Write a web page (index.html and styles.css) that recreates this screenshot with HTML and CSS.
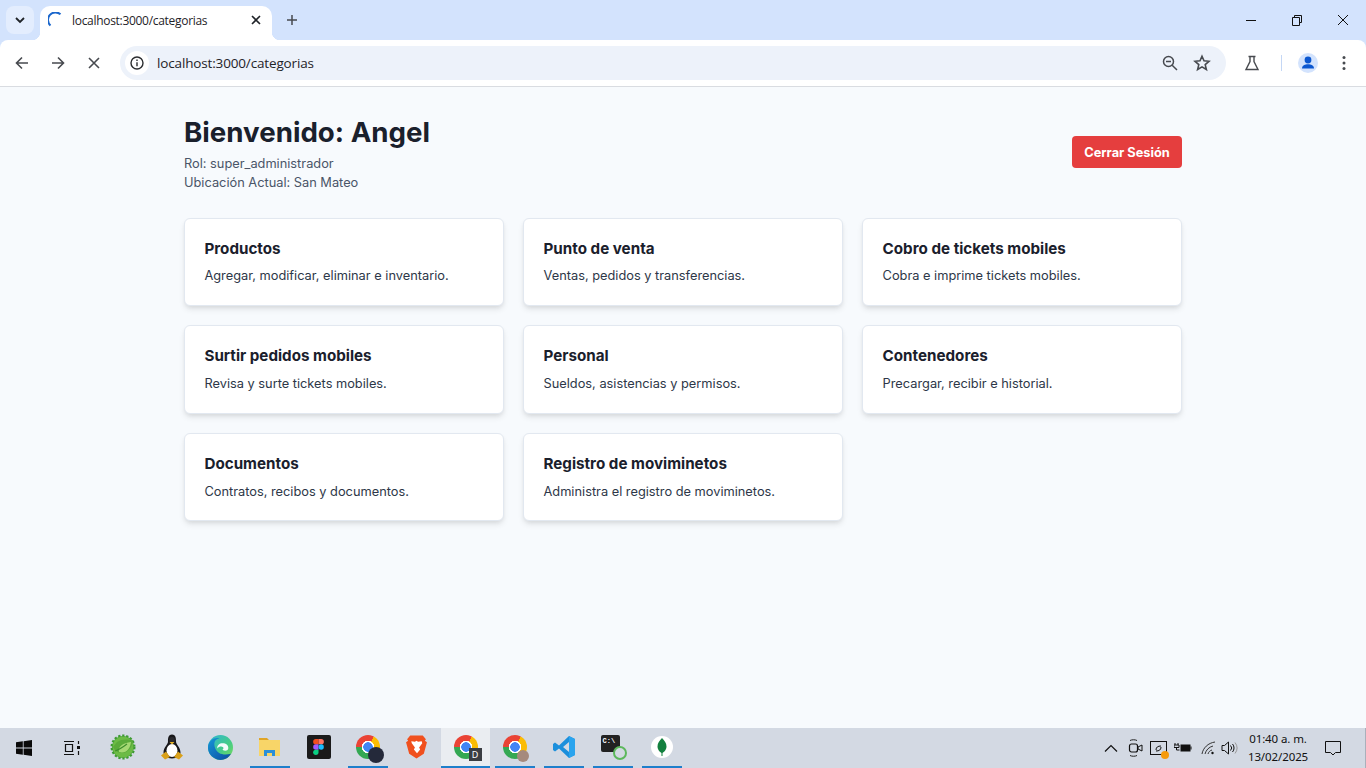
FILE: index.html
```html
<!DOCTYPE html>
<html lang="es">
<head>
<meta charset="utf-8">
<title>localhost:3000/categorias</title>
<link rel="stylesheet" href="styles.css">
</head>
<body>
<header class="chrome">
  <div class="tabstrip">
    <button class="tab-search"><svg width="12" height="12" viewBox="0 0 12 12"><path d="M2 4l4 4 4-4" fill="none" stroke="#1f2328" stroke-width="1.8"/></svg></button>
    <div class="tab">
      <svg class="spinner" width="14" height="16" viewBox="0 0 14 16"><path d="M12.500 2.300A6.800 6.800 0 0 0 2.500 13.500" fill="none" stroke="#1a66cc" stroke-width="2"/></svg>
      <span class="tab-title">localhost:3000/categorias</span>
      <svg class="tab-close" width="10" height="10" viewBox="0 0 10 10"><path d="M1 1l8 8M9 1l-8 8" stroke="#1f2328" stroke-width="1.6"/></svg>
    </div>
    <svg class="new-tab" width="12" height="12" viewBox="0 0 12 12"><path d="M6 1v10M1 6h10" stroke="#474a4f" stroke-width="1.5"/></svg>
    <div class="window-controls">
      <svg width="46" height="12" viewBox="0 0 46 12"><path d="M18 6.500h10" stroke="#111" stroke-width="1"/></svg>
      <svg width="46" height="12" viewBox="0 0 46 12"><path d="M18.500 3.500h7v8h-7zM20.500 3.500v-2h7v7h-2" fill="none" stroke="#111" stroke-width="1"/></svg>
      <svg width="46" height="12" viewBox="0 0 46 12"><path d="M18 1l10 10M28 1l-10 10" stroke="#111" stroke-width="1"/></svg>
    </div>
  </div>
  <div class="toolbar">
    <svg class="nav-icon" width="16" height="16" viewBox="0 0 16 16"><path d="M14 8H2.500M8 2.500L2.500 8 8 13.500" fill="none" stroke="#474a4f" stroke-width="1.6"/></svg>
    <svg class="nav-icon" width="16" height="16" viewBox="0 0 16 16"><path d="M2 8h11.500M8 2.500L13.500 8 8 13.500" fill="none" stroke="#474a4f" stroke-width="1.6"/></svg>
    <svg class="nav-icon" width="16" height="16" viewBox="0 0 16 16"><path d="M3 3l10 10M13 3L3 13" stroke="#474a4f" stroke-width="1.6"/></svg>
    <div class="omnibox">
      <span class="site-info"><svg width="16" height="16" viewBox="0 0 16 16"><circle cx="8" cy="8" r="6" fill="none" stroke="#2b2d30" stroke-width="1.4"/><path d="M8 7.200v4M8 4.600v1.400" stroke="#2b2d30" stroke-width="1.4"/></svg></span>
      <span class="url">localhost:3000/categorias</span>
      <svg class="omni-zoom" width="18" height="18" viewBox="0 0 18 18"><circle cx="7.500" cy="7.500" r="5" fill="none" stroke="#474a4f" stroke-width="1.5"/><path d="M5 7.500h5M11.200 11.200L16 16" stroke="#474a4f" stroke-width="1.5"/></svg>
      <svg class="omni-star" width="18" height="18" viewBox="0 0 18 18"><path d="M9 2.200l2 4.600 5 .5-3.800 3.300 1.200 4.900L9 12.900l-4.400 2.600 1.200-4.900L2 7.300l5-.5z" fill="none" stroke="#474a4f" stroke-width="1.6"/></svg>
    </div>
    <svg class="lab" width="16" height="16" viewBox="0 0 16 16"><path d="M4.500 1.500h7M6 1.500v5L2 14.500h12l-4-8v-5" fill="none" stroke="#474a4f" stroke-width="1.4"/></svg>
    <span class="tool-sep"></span>
    <span class="avatar"><svg width="20" height="20" viewBox="0 0 20 20"><circle cx="10" cy="7" r="3.400" fill="#0b57d0"/><path d="M4 15.500c0-3 3-4.300 6-4.300s6 1.300 6 4.300z" fill="#0b57d0"/></svg></span>
    <svg class="kebab" width="4" height="16" viewBox="0 0 4 16"><circle cx="2" cy="2.500" r="1.500" fill="#474a4f"/><circle cx="2" cy="8" r="1.500" fill="#474a4f"/><circle cx="2" cy="13.500" r="1.500" fill="#474a4f"/></svg>
  </div>
</header>

<main class="page">
  <div class="container">
    <section class="welcome">
      <div>
        <h1>Bienvenido: Angel</h1>
        <p class="meta">Rol: super_administrador</p>
        <p class="meta">Ubicación Actual: San Mateo</p>
      </div>
      <button class="logout">Cerrar Sesión</button>
    </section>
    <section class="cards">
      <article class="card"><h2>Productos</h2><p>Agregar, modificar, eliminar e inventario.</p></article>
      <article class="card"><h2>Punto de venta</h2><p>Ventas, pedidos y transferencias.</p></article>
      <article class="card"><h2>Cobro de tickets mobiles</h2><p>Cobra e imprime tickets mobiles.</p></article>
      <article class="card"><h2>Surtir pedidos mobiles</h2><p>Revisa y surte tickets mobiles.</p></article>
      <article class="card"><h2>Personal</h2><p>Sueldos, asistencias y permisos.</p></article>
      <article class="card"><h2>Contenedores</h2><p>Precargar, recibir e historial.</p></article>
      <article class="card"><h2>Documentos</h2><p>Contratos, recibos y documentos.</p></article>
      <article class="card"><h2>Registro de moviminetos</h2><p>Administra el registro de moviminetos.</p></article>
    </section>
  </div>
</main>

<footer class="taskbar">
  <div class="task-start"><svg width="16" height="16" viewBox="0 0 16 16"><path d="M0 2.300l6.800-1v6.300H0zM7.600 1.200L16 0v7.600H7.600zM0 8.400h6.800v6.300l-6.800-1zM7.600 8.400H16V16l-8.400-1.200z" fill="#0a0a0a"/></svg></div>
  <div class="task-view"><svg width="18" height="16" viewBox="0 0 18 16"><path d="M1 1.500h10M1 14.500h10M2.500 4.500h7v7h-7zM15.500 1v3M15.500 11v4" fill="none" stroke="#111" stroke-width="1.2"/><rect x="14" y="6" width="3" height="3" fill="#111"/></svg></div>
  <div class="task-item"><svg width="26" height="26" viewBox="0 0 26 26"><circle cx="13" cy="13" r="11" fill="#4fa53a" stroke="#3d9a33" stroke-width="3" stroke-dasharray="2.200 1.700"/><circle cx="13" cy="13" r="10.500" fill="#6cbb45"/><path d="M3 13l4-5c4-3 10-3 16-2-1 7-4 12-10 13-3 .5-6-1-8-3z" fill="#5aab3a"/><path d="M9 18c-1-6 4-9 12-10-1 7-5 12-12 10z" fill="#a5d873"/><path d="M5 17c4-1 8-4 12-7" stroke="#3e8f2d" stroke-width="1.200" fill="none"/></svg></div>
  <div class="task-item"><svg width="22" height="26" viewBox="0 0 22 26"><path d="M11 .500c-4 0-4 4-4 7 0 3-4.500 6-4.500 11 0 3 3.500 6 8.500 6s8.500-3 8.500-6c0-5-4.500-8-4.500-11 0-3 0-7-4-7z" fill="#17171a"/><ellipse cx="11" cy="16.500" rx="5.500" ry="6.500" fill="#fff"/><ellipse cx="11" cy="6" rx="2.800" ry="3" fill="#2a2a2e"/><path d="M8.500 8h5l-2.500 2.500z" fill="#eab52a"/><path d="M0 21.500l5-4 4 5.500-5 2.500zM22 21.500l-5-4-4 5.500 5 2.500z" fill="#d9a019"/></svg></div>
  <div class="task-item"><svg width="25" height="25" viewBox="0 0 24 24"><defs><linearGradient id="edge" x1="0" y1="0" x2="1" y2="1"><stop offset="0" stop-color="#2fb5d8"/><stop offset=".6" stop-color="#46cc86"/><stop offset="1" stop-color="#7ede58"/></linearGradient><linearGradient id="edge2" x1="0" y1="0" x2="1" y2="1"><stop offset="0" stop-color="#1596d8"/><stop offset="1" stop-color="#0c4aa0"/></linearGradient></defs><circle cx="12" cy="12" r="12" fill="url(#edge)"/><path d="M0 12C0 5 6 2 11 3 6 4 5 8 7 13c2 5 8 7 15 5-4 7-12 7-16 4-4-2-6-6-6-10z" fill="url(#edge2)"/><path d="M9 13c-.5-3 2-5 5-5 3.500 0 5.500 2 5.500 4.500 0 1.500-1 2.500-3 2.500-1.500 0-2.500-.5-2.500-1 1-.5 1-1.500.5-2.200-.8-1-2.500-1-3.500-.5-1 .5-1.700 1-2 1.700z" fill="#f3fbfd"/></svg></div>
  <div class="task-item running"><svg width="22" height="20" viewBox="0 0 22 20"><path d="M0 1h8l2 2h-10z" fill="#e0a526"/><rect y="3" width="21" height="16" fill="#f8d568"/><path d="M5 19v-6h11v6h-3v-3H8v3z" fill="#2b8fd9"/></svg></div>
  <div class="task-item"><span class="figma-box"><svg width="11" height="16" viewBox="0 0 12 18"><path d="M3 0h3v6H3a3 3 0 0 1 0-6z" fill="#f24e1e"/><path d="M6 0h3a3 3 0 0 1 0 6H6z" fill="#ff7262"/><path d="M3 6h3v6H3a3 3 0 0 1 0-6z" fill="#a259ff"/><circle cx="9" cy="9" r="3" fill="#1abcfe"/><path d="M3 12h3v3a3 3 0 1 1-3-3z" fill="#0acf83"/></svg></span></div>
  <div class="task-item running"><span class="chrome-wrap"><span class="chrome-logo"></span><span class="badge badge-dark"></span></span></div>
  <div class="task-item"><svg width="23" height="26" viewBox="0 0 22 24"><path d="M5 1h12l3 3.500-1 1.500 2 1.500-3 11-7 4.500-7-4.500-3-11 2-1.500-1-1.500z" fill="#f0501e"/><path d="M6 6.500l3.500.5 1.500-1 1.500 1 3.500-.5.500 2-3 4 1 2-3 3.500-3-3.500 1-2-3-4z" fill="#fff"/></svg></div>
  <div class="task-item active running-active"><span class="chrome-wrap"><span class="chrome-logo"></span><span class="badge badge-d">D</span></span></div>
  <div class="task-item running"><span class="chrome-wrap"><span class="chrome-logo"></span><span class="badge badge-photo"></span></span></div>
  <div class="task-item running"><svg width="24" height="24" viewBox="0 0 24 24"><path d="M17 1l6 3v16l-6 3-10-9.500-4 3L1 15v-6l2-1.500 4 3zM17 7l-6 5 6 5z" fill="#1b8fdc"/><path d="M17 1l6 3v16l-6 3z" fill="#2aa4ee"/></svg></div>
  <div class="task-item running"><span class="cmd-wrap"><span class="cmd-box">C:\</span><span class="cmd-ring"></span></span></div>
  <div class="task-item running"><span class="mongo"><svg width="10" height="18" viewBox="0 0 10 18"><path d="M5 0c2.500 3 4.500 5 4.500 8.500S7 14 5.500 15v3h-1v-3C3 14 .5 12 .5 8.500S2.500 3 5 0z" fill="#13803f"/></svg></span></div>
  <div class="tray">
    <svg width="14" height="8" viewBox="0 0 14 8"><path d="M1 7.500l6-6 6 6" fill="none" stroke="#111" stroke-width="1.2"/></svg>
    <svg class="tray-cam" width="15" height="20" viewBox="0 0 15 20"><path d="M2 2.500c2-1 5-1 7 0M2 17.500c2 1 5 1 7 0" fill="none" stroke="#222"/><rect x="1.500" y="6" width="8" height="8" rx="2" fill="none" stroke="#111" stroke-width="1.200"/><path d="M10 9l4-2v6l-4-2z" fill="none" stroke="#111"/></svg>
    <span class="tray-ws"><svg width="17" height="15" viewBox="0 0 17 15"><rect x=".5" y=".5" width="16" height="13" fill="none" stroke="#111"/><path d="M6 9c0-3 2-4 5-4M11 6c0 3-2 4-5 4" fill="none" stroke="#111"/></svg><span class="tray-dot"></span></span>
    <svg class="tray-bat" width="18" height="12" viewBox="0 0 18 12"><path d="M1 1v2M4 1v2M0 3h5v2.500H0zM2.500 5.500V8h3" fill="none" stroke="#111"/><rect x="6.500" y="2.500" width="10" height="7" fill="#111"/><path d="M17 4.500v3" stroke="#111"/></svg>
    <svg class="tray-wifi" width="16" height="14" viewBox="0 0 16 14"><path d="M1 13C2 7 7 2 14 1M4 13c1-4 4-7 8-8M7 13c.5-2 2-3.500 4-4" fill="none" stroke="#333"/><circle cx="11.500" cy="12" r="1.200" fill="#111"/></svg>
    <svg class="tray-vol" width="17" height="14" viewBox="0 0 17 14"><path d="M1 4.500h2.500L7.500 1v12L3.500 9.500H1z" fill="none" stroke="#111"/><path d="M9.500 4.500a3.500 3.500 0 0 1 0 5M11.500 3a6 6 0 0 1 0 8" fill="none" stroke="#111"/><path d="M14 1.500a9 9 0 0 1 0 11" fill="none" stroke="#999"/></svg>
    <div class="clock"><span>01:40 a. m.</span><span>13/02/2025</span></div>
    <svg class="notify" width="16" height="15" viewBox="0 0 16 15"><path d="M.5.500h15v11h-5L8 14l-2.500-2.500h-5z" fill="none" stroke="#111"/></svg>
    <span class="show-desktop"></span>
  </div>
</footer>
</body>
</html>
```

FILE: styles.css
```css
* { box-sizing: border-box; margin: 0; padding: 0; }
html, body { height: 100%; }
body {
  width: 1366px;
  height: 768px;
  overflow: hidden;
  display: flex;
  flex-direction: column;
  font-family: Inter, "Liberation Sans", sans-serif;
  background: #f7fafd;
}

/* Browser frame */
.chrome { flex: none; height: 87px; background: #d3e3fd; font-family: Roboto, "Noto Sans", sans-serif; }
.tabstrip { height: 40px; display: flex; align-items: flex-end; padding-left: 6px; }
.tab-search {
  width: 28px; height: 28px; margin-bottom: 6px; margin-right: 6px;
  border: 0; border-radius: 8px; background: #e3edfe;
  display: flex; align-items: center; justify-content: center;
}
.tab {
  width: 232px; height: 34px;
  background: #fff; border-radius: 10px 10px 0 0;
  display: flex; align-items: center;
  padding: 0 0 6px 8px;
  position: relative;
}
.tab::before, .tab::after {
  content: ""; position: absolute; bottom: 0; width: 8px; height: 8px;
  background: radial-gradient(circle at 0 0, transparent 8px, #fff 8.500px);
}
.tab::before { left: -8px; }
.tab::after { right: -8px; background: radial-gradient(circle at 100% 0, transparent 8px, #fff 8.500px); }
.spinner { flex: none; }
.tab-title { margin-left: 10px; font-size: 12px; color: #1f2328; width: 172px; white-space: nowrap; font-family: "Open Sans", sans-serif; letter-spacing: -0.3px; }
.tab-close { margin-left: 7px; }
.new-tab { margin: 0 0 14px 14px; }
.window-controls { margin-left: auto; display: flex; align-items: center; width: 138px; height: 40px; }

.toolbar {
  height: 47px; background: #fff; border-bottom: 1px solid #d9dce1;
  border-radius: 8px 8px 0 0;
  display: flex; align-items: center; padding: 0 20px 1px 14px;
}
.nav-icon { flex: none; margin-right: 20px; }
.nav-icon:nth-child(3) { margin-right: 18px; }
.omnibox {
  width: 1106px; height: 34px;
  background: #edf2fa; border-radius: 17px;
  display: flex; align-items: center; padding: 0 15px 0 5px;
  flex: none;
}
.site-info {
  width: 24px; height: 24px; border-radius: 50%; background: #fff;
  display: flex; align-items: center; justify-content: center;
}
.url { margin-left: 8px; font-size: 13.500px; color: #1f2328; font-family: "Open Sans", sans-serif; letter-spacing: -0.15px; }
.omni-zoom { margin-left: auto; }
.omni-star { margin-left: 14px; }
.lab { margin-left: 18px; flex: none; }
.tool-sep { width: 1px; height: 16px; background: #c4d7f5; margin-left: 21px; flex: none; }
.avatar { width: 20px; height: 20px; border-radius: 50%; background: #d3e3fd; margin-left: 16px; flex: none; display: flex; }
.kebab { margin-left: 24px; flex: none; }

/* Page */
.page { flex: 1; min-height: 0; padding: 27px 184px 0; background: #f7fafd; }
.container { width: 998px; }
.welcome { display: flex; align-items: center; justify-content: space-between; margin-bottom: 25.300px; }
h1 { font-size: 27.700px; line-height: 36px; font-weight: 700; color: #1a202c; margin-bottom: 4px; }
.meta { font-size: 12.800px; line-height: 19.200px; color: #4a5568; }
.logout {
  width: 110px; height: 32px; border: 0; border-radius: 4px; margin-bottom: 2px; padding-top: 2px;
  background: #e53e3e; color: #fff;
  font: 700 12.800px/28px Inter, sans-serif;
}
.cards { display: grid; grid-template-columns: repeat(3, 1fr); gap: 19.200px; }
.card {
  height: 88.400px; padding: 20px 19.450px;
  background: #fff; border: 1px solid #e2e8f0; border-radius: 6px;
  box-shadow: 0 4px 6px -1px rgba(0,0,0,.1), 0 2px 4px -1px rgba(0,0,0,.06);
}
.card h2 { font-size: 15.200px; line-height: 19px; font-weight: 700; color: #1a202c; margin-bottom: 8.700px; }
.card p { font-size: 12.800px; line-height: 19.200px; color: #2d3748; }

/* Taskbar */
.taskbar { flex: none; height: 40px; background: #d3d9e3; display: flex; align-items: stretch; font-family: "Noto Sans", sans-serif; }
.task-start { width: 48px; display: flex; align-items: center; justify-content: center; }
.task-view { width: 50px; padding-right: 2px; display: flex; align-items: center; justify-content: center; }
.task-item { width: 49px; display: flex; align-items: center; justify-content: center; border-bottom: 2px solid transparent; position: relative; }
.task-item::after { content: ""; position: absolute; left: 5px; right: 4px; bottom: -2px; height: 2px; }
.running::after { background: #1e7fcb; }
.active { background: #eaedf1; }
.running-active::after { left: 0; right: 0; background: #1e7fcb; }
.figma-box { width: 24px; height: 24px; border-radius: 2px; background: #1a1a1a; display: flex; align-items: center; justify-content: center; }
.chrome-wrap { width: 24px; height: 24px; position: relative; display: block; }
.chrome-logo {
  display: block; width: 24px; height: 24px; border-radius: 50%;
  background:
    radial-gradient(circle, #4285f4 0 4.500px, #fff 5px 6px, transparent 6.500px),
    conic-gradient(from 30deg, #fbbc04 0 120deg, #34a853 120deg 240deg, #ea4335 240deg 360deg);
}
.badge { position: absolute; }
.badge-dark { right: -4px; bottom: -4px; width: 16px; height: 16px; border-radius: 50%; background: #24293a; }
.badge-d { right: -4px; bottom: -2px; width: 13px; height: 13px; background: #3a3d42; color: #fff; font-size: 9px; line-height: 13px; text-align: center; }
.badge-photo { right: -2px; bottom: -3px; width: 12px; height: 12px; border-radius: 50%; background: #a58a7d; }
.cmd-wrap { width: 24px; height: 24px; position: relative; display: block; }
.cmd-box { display: block; width: 19px; height: 17px; background: #222; border-radius: 2px; color: #fff; font: 700 7px/12px "Liberation Mono", monospace; padding-left: 2px; }
.cmd-ring { position: absolute; right: -2px; bottom: -1px; width: 14px; height: 14px; border: 2.500px solid #5cb85c; border-radius: 50%; background: #d3d9e3; }
.mongo { width: 22px; height: 22px; border-radius: 50%; background: #fff; display: flex; align-items: center; justify-content: center; }

.tray { margin-left: auto; display: flex; align-items: center; }
.tray-cam { margin-left: 10px; }
.tray-ws { margin-left: 7px; position: relative; display: flex; }
.tray-dot { position: absolute; right: -2px; bottom: -3px; width: 8px; height: 8px; border-radius: 50%; background: #f59a0c; }
.tray-bat { margin-left: 7px; }
.tray-wifi { margin-left: 9px; }
.tray-vol { margin-left: 4px; }
.clock { width: 64px; margin-left: 8px; display: flex; flex-direction: column; align-items: center; font-size: 11.500px; line-height: 18px; color: #111; letter-spacing: -0.1px; white-space: nowrap; }
.notify { margin-left: 15px; }
.show-desktop { width: 25px; height: 40px; border-right: 1px solid #aab0bb; }
```
